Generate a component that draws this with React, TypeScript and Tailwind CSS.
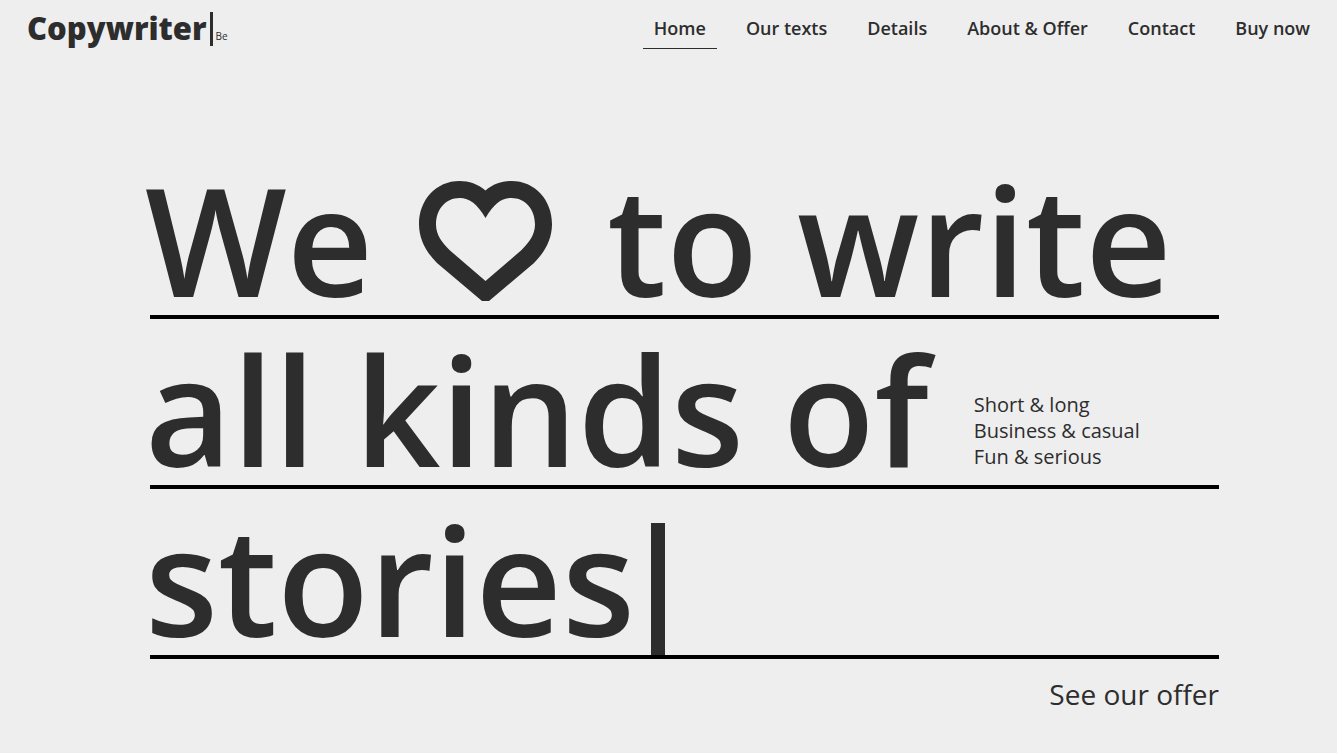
import React from "react";

const links = ["Home", "Our texts", "Details", "About & Offer", "Contact", "Buy now"];

function Header() {
  return (
    <header className="flex items-start justify-between pr-4 pl-[27px]">
      <a href="#home" className="mt-3 flex h-[34px] items-start">
        <span className="text-[31px] leading-8 font-extrabold">Copywriter</span>
        <span className="ml-[3px] h-full w-[3px] bg-[#2d2d2d]" />
        <span className="mt-4 ml-[3px] text-[10px] leading-4">Be</span>
      </a>
      <nav className="mt-2 flex gap-[18px]">
        {links.map((link, i) => (
          <a
            key={link}
            href="#"
            className={
              i === 0
                ? "border-b border-[#2d2d2d] px-[11px] text-lg leading-10 font-semibold"
                : "border-b border-transparent px-[11px] text-lg leading-10 font-semibold"
            }
          >
            {link}
          </a>
        ))}
      </nav>
    </header>
  );
}

function Heart() {
  return (
    <svg
      viewBox="0 0 133 120"
      className="mr-[55px] mb-3.5 ml-[46px] h-[120px] w-[133px] shrink-0"
      fill="#2d2d2d"
      fillRule="evenodd"
      role="img"
      aria-label="love"
    >
      <path d="M66.5 9.5C59 3 50 0 40.5 0C17 0 0 19 0 43C0 58 7 71 18 82L63 120H70L115 82C126 71 133 58 133 43C133 19 116 0 92.5 0C83 0 74 3 66.5 9.5ZM66.5 37C58 23 51 17 40.5 17C27 17 17 28 17 43.5C17 54 23 61.5 31 69.5L66.5 100L102 69.5C110 61.5 116 54 116 43.5C116 28 106 17 92.5 17C82 17 75 23 66.5 37Z" />
    </svg>
  );
}

const line = "flex h-[170px] items-end border-b-4 border-black whitespace-nowrap";

export default function App() {
  return (
    <div className="min-h-screen bg-[#eeeeee] font-['Open_Sans',sans-serif] text-[#2d2d2d]">
      <Header />
      <main className="mt-[100px] pr-[118px] pl-[150px]">
        <h1 className="text-[150px] leading-[152px] font-semibold">
          <span className={line}>
            <span className="-ml-[5px]">We</span>
            <Heart />
            <span>to write</span>
          </span>
          <span className={line}>
            <span className="-ml-[5px]">all kinds of</span>
            <span className="mb-[15px] ml-[45px] text-xl leading-[26px] font-normal">
              Short &amp; long<br />Business &amp; casual<br />Fun &amp; serious
            </span>
          </span>
          <span className={line}>
            <span className="-ml-[5px]">stories</span>
            <span className="ml-4 h-[132px] w-3.5 bg-[#2d2d2d]" />
          </span>
        </h1>
        <div className="mt-[15px] text-right">
          <a href="#offer" className="text-[28px] leading-10">See our offer</a>
        </div>
      </main>
    </div>
  );
}
